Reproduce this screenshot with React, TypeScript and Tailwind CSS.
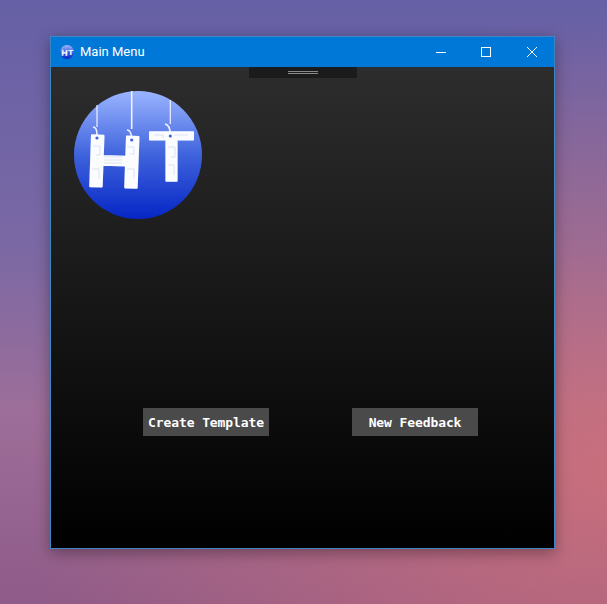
import React from "react";

function LogoBadge({ size }: { size: number }) {
  return (
    <svg width={size} height={size} viewBox="0 0 128 128" className="block shrink-0">
      <defs>
        <linearGradient id={`disc-${size}`} x1="0" y1="0" x2="0" y2="1">
          <stop offset="0" stopColor="#9ab4ff" />
          <stop offset="0.5" stopColor="#3f63dd" />
          <stop offset="1" stopColor="#0626c4" />
        </linearGradient>
      </defs>
      <circle cx="64" cy="64" r="64" fill={`url(#disc-${size})`} />
      {/* strings */}
      <g stroke="#eef2ff" strokeWidth="1.2" fill="none">
        <path d="M23 14V36" />
        <path d="M57.700 0V38" strokeWidth="1.600" />
        <path d="M96.300 9V33" />
        <path d="M19 36q4 0 4 8" strokeWidth="1.600" />
        <path d="M53 39q4 0 4.700 8" strokeWidth="1.600" />
        <path d="M91 33q5 1 5.300 10" strokeWidth="1.600" />
      </g>
      <g
        fill="#fbfcff"
        stroke="#fbfcff"
        strokeLinejoin="round"
        fontFamily="'Liberation Sans', sans-serif"
        fontWeight="700"
      >
        <text
          x="12"
          y="96"
          fontSize="74"
          strokeWidth="2"
          transform="rotate(2 39 70)"
          textLength="57"
          lengthAdjust="spacingAndGlyphs"
        >
          H
        </text>
        <text x="75" y="90" fontSize="70" strokeWidth="1.500" textLength="45" lengthAdjust="spacingAndGlyphs">
          T
        </text>
      </g>
      {/* punched holes and the fine board traces on the letters */}
      <g fill="#3f63dd">
        <circle cx="23" cy="47" r="1.600" />
        <circle cx="57.700" cy="49" r="1.600" />
        <circle cx="96.300" cy="45" r="1.600" />
      </g>
      <g stroke="#c9d0e8" strokeWidth="0.600" fill="none">
        <path d="M19 55h7v9h-4M18 78h7v10" />
        <path d="M30 66h18M30 69h18M30 72h18" />
        <path d="M53 56h7v7h-4M53 78h7v9" />
        <path d="M80 44h9v3M100 44h14M94 56h7v10h-4M94 74h6v10" />
      </g>
    </svg>
  );
}

function WindowButton({ className, children }: { className: string; children: React.ReactNode }) {
  return <div className={`flex h-full items-center justify-center ${className}`}>{children}</div>;
}

function ActionButton({ label }: { label: string }) {
  return (
    <button className="flex h-7 w-[126px] items-center justify-center bg-[#4a4a4a] pt-px font-['DejaVu_Sans_Mono',monospace] text-[13px] font-bold tracking-[-0.1px] text-white">
      {label}
    </button>
  );
}

export default function App() {
  return (
    <div className="h-[604px] w-[607px] overflow-hidden bg-[radial-gradient(ellipse_at_100%_78%,rgba(212,112,118,0.8)_0%,rgba(212,112,118,0)_68%),linear-gradient(180deg,#6660a6_0%,#7a68a4_40%,#9d6e99_68%,#8f5b88_100%)] pl-[50px] pt-[36px]">
      <div className="flex h-[513px] w-[505px] flex-col border border-[#3d86c6] shadow-[0_4px_14px_rgba(0,0,0,0.35)]">
        <div className="flex h-[30px] shrink-0 items-center bg-[#0078d7] pl-[9px] font-['Roboto',sans-serif] text-[13px] text-white">
          <LogoBadge size={14} />
          <span className="ml-[6px]">Main Menu</span>
          <div className="ml-auto flex h-full">
            <WindowButton className="w-[42px]">
              <svg width="10" height="10" viewBox="0 0 10 10" stroke="white" fill="none">
                <path d="M0 5.500H10" />
              </svg>
            </WindowButton>
            <WindowButton className="w-[48px]">
              <svg width="10" height="10" viewBox="0 0 10 10" stroke="white" fill="none">
                <rect x="0.500" y="0.500" width="9" height="9" />
              </svg>
            </WindowButton>
            <WindowButton className="w-[44px]">
              <svg width="10" height="10" viewBox="0 0 10 10" stroke="white" fill="none">
                <path d="M0 0L10 10M10 0L0 10" />
              </svg>
            </WindowButton>
          </div>
        </div>
        <div className="flex min-h-0 flex-1 flex-col bg-[linear-gradient(180deg,#2d2d2d_0%,#000000_100%)]">
          <div className="mx-auto flex h-[11px] w-[108px] shrink-0 flex-col items-center justify-center gap-px bg-[#1b1b1b]">
            <div className="h-px w-[30px] bg-[#8a8a8a]" />
            <div className="h-px w-[30px] bg-[#8a8a8a]" />
          </div>
          <div className="ml-[23px] mt-[13px]">
            <LogoBadge size={128} />
          </div>
          <div className="ml-[92px] mt-[189px] flex gap-[83px]">
            <ActionButton label="Create Template" />
            <ActionButton label="New Feedback" />
          </div>
        </div>
      </div>
    </div>
  );
}
